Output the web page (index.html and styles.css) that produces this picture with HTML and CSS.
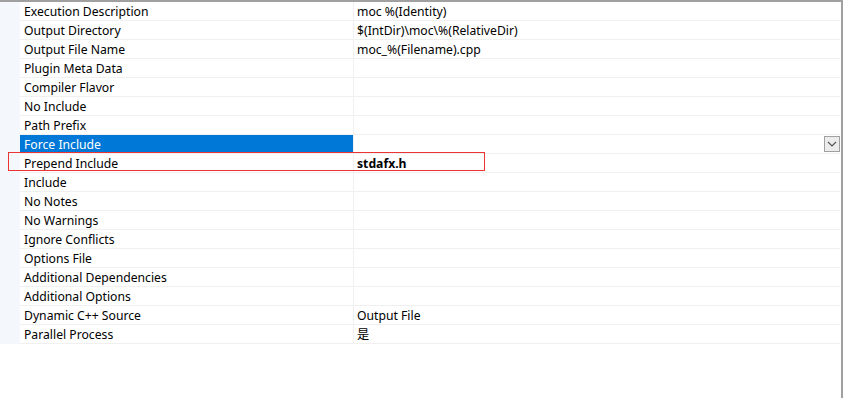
FILE: index.html
```html
<!DOCTYPE html>
<html lang="en">
<head>
    <meta charset="UTF-8">
    <title>Property Grid</title>
    <link rel="stylesheet" href="styles.css">
</head>
<body>
    <div class="frame">
        <div class="grid">
            <div class="row"><div class="gutter"></div><div class="name">Execution Description</div><div class="value">moc %(Identity)</div></div>
            <div class="row"><div class="gutter"></div><div class="name">Output Directory</div><div class="value">$(IntDir)\moc\%(RelativeDir)</div></div>
            <div class="row"><div class="gutter"></div><div class="name">Output File Name</div><div class="value">moc_%(Filename).cpp</div></div>
            <div class="row"><div class="gutter"></div><div class="name">Plugin Meta Data</div><div class="value"></div></div>
            <div class="row"><div class="gutter"></div><div class="name">Compiler Flavor</div><div class="value"></div></div>
            <div class="row"><div class="gutter"></div><div class="name">No Include</div><div class="value"></div></div>
            <div class="row"><div class="gutter"></div><div class="name">Path Prefix</div><div class="value"></div></div>
            <div class="row selected">
                <div class="gutter"></div>
                <div class="name">Force Include</div>
                <div class="value">
                    <span class="drop">
                        <svg width="10" height="6" viewBox="0 0 10 6"><path d="M1 1 L5 5 L9 1" fill="none" stroke="#555" stroke-width="1.2"/></svg>
                    </span>
                </div>
            </div>
            <div class="row marked"><div class="gutter"></div><div class="name">Prepend Include</div><div class="value bold">stdafx.h</div><span class="mark"></span></div>
            <div class="row"><div class="gutter"></div><div class="name">Include</div><div class="value"></div></div>
            <div class="row"><div class="gutter"></div><div class="name">No Notes</div><div class="value"></div></div>
            <div class="row"><div class="gutter"></div><div class="name">No Warnings</div><div class="value"></div></div>
            <div class="row"><div class="gutter"></div><div class="name">Ignore Conflicts</div><div class="value"></div></div>
            <div class="row"><div class="gutter"></div><div class="name">Options File</div><div class="value"></div></div>
            <div class="row"><div class="gutter"></div><div class="name">Additional Dependencies</div><div class="value"></div></div>
            <div class="row"><div class="gutter"></div><div class="name">Additional Options</div><div class="value"></div></div>
            <div class="row"><div class="gutter"></div><div class="name">Dynamic C++ Source</div><div class="value">Output File</div></div>
            <div class="row"><div class="gutter"></div><div class="name">Parallel Process</div><div class="value">是</div></div>
        </div>
    </div>
</body>
</html>
```

FILE: styles.css
```css
html, body {
    margin: 0;
    padding: 0;
    background-color: #ffffff;
}
body {
    font-family: "Noto Sans", "Noto Sans CJK SC", sans-serif;
    font-size: 12.2px;
    color: #000000;
}
.frame {
    width: 841px;
    height: 396px;
    border-top: 2px solid #a0a0a0;
    border-right: 2px solid #a0a0a0;
}
.row {
    position: relative;
    display: grid;
    grid-template-columns: 20px 334px 486px;
    height: 19px;
}
.gutter {
    background-color: #f4f7fc;
}
.name, .value {
    height: 17px;
    padding-top: 1px;
    line-height: 17px;
    border-bottom: 1px solid #f0f0f0;
    white-space: nowrap;
    overflow: hidden;
}
.name {
    padding-left: 4px;
    border-right: 1px solid #f0f0f0;
}
.value {
    position: relative;
    padding-left: 3px;
}
.bold {
    font-weight: bold;
}
.selected .name {
    background-color: #0078d7;
    color: #ffffff;
}
.drop {
    position: absolute;
    right: 0;
    top: 1px;
    width: 14px;
    height: 14px;
    border: 1px solid #a0a0a0;
    background-color: #ececec;
    display: flex;
    align-items: center;
    justify-content: center;
}
.mark {
    position: absolute;
    left: 8px;
    top: -2px;
    width: 475px;
    height: 17px;
    border: 1px solid #ee3333;
}
```
